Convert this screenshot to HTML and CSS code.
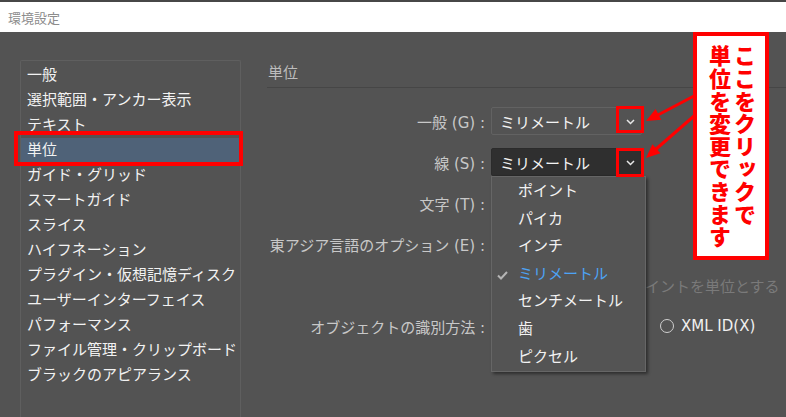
FILE: index.html
```html
<!DOCTYPE html>
<html lang="ja">
<head>
<meta charset="utf-8">
<title>環境設定</title>
<link rel="stylesheet" href="styles.css">
</head>
<body>
<header class="titlebar"><span class="title">環境設定</span></header>
<div class="main">
  <nav class="sidebar">
    <div class="item">一般</div>
    <div class="item">選択範囲・アンカー表示</div>
    <div class="item">テキスト</div>
    <div class="item selected">単位</div>
    <div class="item">ガイド・グリッド</div>
    <div class="item">スマートガイド</div>
    <div class="item">スライス</div>
    <div class="item">ハイフネーション</div>
    <div class="item">プラグイン・仮想記憶ディスク</div>
    <div class="item">ユーザーインターフェイス</div>
    <div class="item">パフォーマンス</div>
    <div class="item">ファイル管理・クリップボード</div>
    <div class="item">ブラックのアピアランス</div>
  </nav>
  <section class="panel">
    <h2 class="panel-title">単位</h2>
    <div class="form">
      <div class="label">一般 (G) :</div>
      <div class="control">
        <div class="select">ミリメートル<svg class="chev" width="9" height="6" viewBox="0 0 9 6"><path d="M1 1 L4.5 4.5 L8 1" fill="none" stroke="#e8e8e8" stroke-width="1.5"/></svg></div>
      </div>
      <div class="label">線 (S) :</div>
      <div class="control">
        <div class="select open">ミリメートル<svg class="chev" width="9" height="6" viewBox="0 0 9 6"><path d="M1 1 L4.5 4.5 L8 1" fill="none" stroke="#e8e8e8" stroke-width="1.5"/></svg>
          <ul class="menu">
            <li>ポイント</li>
            <li>パイカ</li>
            <li>インチ</li>
            <li class="checked"><svg class="check" width="11" height="9" viewBox="0 0 11 9"><path d="M1 4.5 L4 7.5 L10 1" fill="none" stroke="#b5b5b5" stroke-width="2"/></svg>ミリメートル</li>
            <li>センチメートル</li>
            <li>歯</li>
            <li>ピクセル</li>
          </ul>
        </div>
      </div>
      <div class="label">文字 (T) :</div>
      <div class="control"></div>
      <div class="label">東アジア言語のオプション (E) :</div>
      <div class="control"></div>
      <div class="label"></div>
      <div class="control"><span class="disabled">ポイントを単位とする</span></div>
      <div class="label">オブジェクトの識別方法 :</div>
      <div class="control"><span class="radio"><span class="circle"></span>XML ID(X)</span></div>
    </div>
  </section>
</div>
<div class="callout">ここをクリックで<br>単位を変更できます</div>
<svg class="annot" width="786" height="417" viewBox="0 0 786 417">
  <rect x="16" y="133" width="225" height="31" fill="none" stroke="#ff0000" stroke-width="4"/>
  <rect x="617.5" y="107.5" width="25" height="24" fill="none" stroke="#ff0000" stroke-width="3"/>
  <rect x="617.5" y="149.5" width="25" height="26" fill="none" stroke="#ff0000" stroke-width="3"/>
  <line x1="694" y1="96" x2="656" y2="116" stroke="#ff0000" stroke-width="3"/>
  <polygon points="646,121 661.2,119.7 655.6,109.1" fill="#ff0000"/>
  <line x1="694" y1="116" x2="655" y2="150" stroke="#ff0000" stroke-width="3"/>
  <polygon points="646,158 660.4,153.2 652.4,144.2" fill="#ff0000"/>
</svg>
</body>
</html>
```
FILE: styles.css
```css
* { box-sizing: border-box; }
html, body {
  margin: 0;
  padding: 0;
}
body {
  width: 786px;
  height: 417px;
  overflow: hidden;
  position: relative;
  background: #535353;
  font-family: "DejaVu Sans", "Noto Sans CJK JP", sans-serif;
  font-size: 15px;
}
.titlebar {
  height: 32px;
  border-top: 2px solid #474747;
  background: #ffffff;
  display: flex;
  align-items: center;
  padding-left: 8px;
}
.title {
  color: #8c8c8c;
  font-size: 13px;
}
.main {
  display: flex;
  align-items: flex-start;
}
.sidebar {
  margin: 28px 0 0 20px;
  width: 221px;
  height: 357px;
  border: 1px solid #5f5f5f;
  border-bottom: 0;
  border-radius: 2px 2px 0 0;
  padding-top: 2px;
}
.item {
  height: 25px;
  line-height: 25px;
  padding-left: 6px;
  color: #f2f2f2;
  white-space: nowrap;
}
.item.selected {
  background: #4f6278;
}
.panel {
  margin-left: 26px;
  flex: 1;
  padding-top: 31px;
}
.panel-title {
  margin: 0;
  font-size: 15px;
  font-weight: normal;
  color: #bdbdbd;
  height: 25px;
  line-height: 21px;
  padding-left: 1px;
  border-bottom: 1px solid #464646;
}
.form {
  margin-top: 19px;
  display: grid;
  grid-template-columns: 218px 1fr;
  grid-auto-rows: 28px;
  column-gap: 6px;
  row-gap: 13px;
}
.label {
  display: flex;
  align-items: center;
  justify-content: flex-end;
  color: #c8c8c8;
  white-space: nowrap;
}
.control {
  display: flex;
  align-items: center;
  white-space: nowrap;
}
.select {
  position: relative;
  width: 151px;
  height: 28px;
  border: 1px solid #626262;
  border-radius: 2px;
  background: #535353;
  color: #f4f4f4;
  display: flex;
  align-items: center;
  padding-left: 8px;
}
.select.open {
  background: #2f2f2f;
  border-color: #2b2b2b;
}
.chev {
  position: absolute;
  right: 6px;
  top: 11px;
}
.menu {
  position: absolute;
  top: 27px;
  left: -1px;
  width: 155px;
  margin: 0;
  padding: 1px 0 0;
  list-style: none;
  background: #545454;
  border: 1px solid #666666;
  box-shadow: 2px 2px 3px rgba(0, 0, 0, 0.45);
  z-index: 5;
}
.menu li {
  position: relative;
  height: 27.6px;
  line-height: 27.6px;
  padding-left: 26px;
  color: #f2f2f2;
}
.menu li.checked {
  color: #4da3f5;
}
.check {
  position: absolute;
  left: 5px;
  top: 10px;
}
.disabled {
  margin-left: 139px;
  color: #7a7a7a;
}
.radio {
  margin-left: 169px;
  display: flex;
  align-items: center;
  color: #f0f0f0;
}
.circle {
  width: 14px;
  height: 14px;
  border: 1.5px solid #cfcfcf;
  border-radius: 50%;
  margin-right: 7px;
}
.callout {
  position: absolute;
  left: 693px;
  top: 32px;
  width: 76px;
  height: 228px;
  border: 4px solid #ff0000;
  background: #ffffff;
  color: #ff0000;
  font-family: "Noto Sans CJK JP", sans-serif;
  font-weight: 900;
  font-size: 22px;
  line-height: 25px;
  letter-spacing: 0.6px;
  writing-mode: vertical-rl;
  padding: 9px 8px 0 0;
  z-index: 6;
}
.annot {
  position: absolute;
  left: 0;
  top: 0;
  pointer-events: none;
  z-index: 7;
}
```
